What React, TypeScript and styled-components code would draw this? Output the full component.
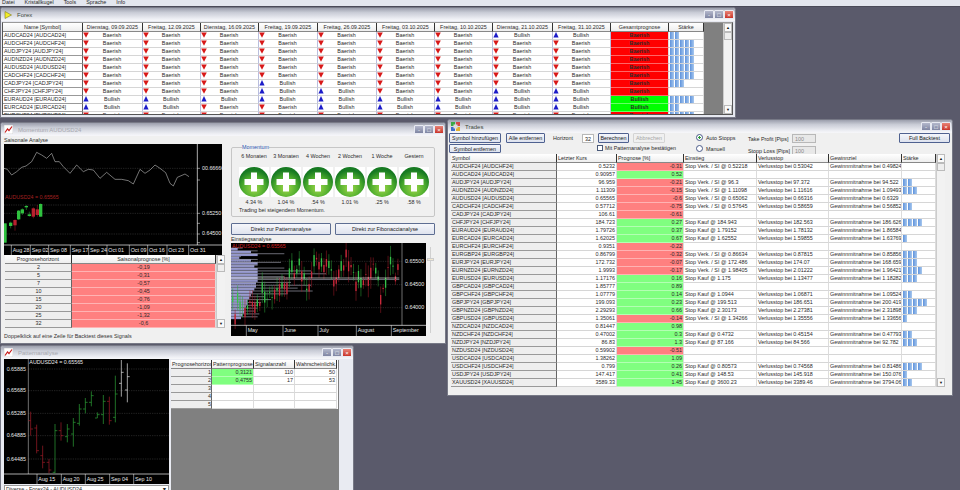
import React from "react";
import styled, { createGlobalStyle } from "styled-components";

const GlobalStyle = createGlobalStyle`
  html, body {
    margin: 0;
    padding: 0;
    background: #5a5a6b;
  }
  * {
    box-sizing: border-box;
  }
`;

const FONT = `"Liberation Sans", Arial, sans-serif`;

const Desktop = styled.div`
  position: relative;
  width: 960px;
  height: 490px;
  overflow: hidden;
  background: #5a5a6b;
  font-family: ${FONT};
  font-size: 5.4px;
  color: #2a2a2a;
`;

const MenuBar = styled.div`
  height: 7px;
  display: flex;
  gap: 10px;
  padding-left: 2px;
  background: #e3e6ee;
  border-bottom: 1px solid #4a4a58;
  line-height: 4px;
  overflow: hidden;
`;

const Win = styled.section<{ $x: number; $y: number; $w: number; $h: number }>`
  position: absolute;
  left: ${(p) => p.$x}px;
  top: ${(p) => p.$y}px;
  width: ${(p) => p.$w}px;
  height: ${(p) => p.$h}px;
  display: flex;
  flex-direction: column;
  background: #e6e8f0;
  border: 1px solid #777986;
  border-radius: 3px 3px 0 0;
  overflow: hidden;
`;

const TitleBar = styled.header<{ $dim?: boolean }>`
  flex: none;
  height: 13px;
  display: flex;
  align-items: center;
  gap: 5px;
  padding: 0 1px 0 3px;
  background: linear-gradient(#9b9eac, #c9ccd6 35%, #eff0f5 85%, #f7f7fa);
  color: ${(p) => (p.$dim ? "#a8a9b0" : "#3c4a3c")};
  font-size: 6px;
`;

const TitleText = styled.span`
  flex: 1;
`;

const CapRow = styled.div`
  display: flex;
  gap: 0;
`;

const CapBtn = styled.span<{ $close?: boolean }>`
  width: 10px;
  height: 9px;
  display: flex;
  align-items: center;
  justify-content: center;
  border: 1px solid #e8eaf2;
  border-radius: 1px;
  background: ${(p) =>
    p.$close
      ? "linear-gradient(#e88478, #c93328)"
      : "linear-gradient(#b4b8cc, #7f85a2)"};
  color: #fff;
  font-size: 6px;
  line-height: 1;
`;

const Caption = () => (
  <CapRow>
    <CapBtn>-</CapBtn>
    <CapBtn>□</CapBtn>
    <CapBtn $close>×</CapBtn>
  </CapRow>
);

const Row = styled.div<{ $cols: string }>`
  display: grid;
  grid-template-columns: ${(p) => p.$cols};
  height: 8px;
  flex: none;
`;

const HeadRow = styled(Row)`
  height: 9px;
`;

const Head = styled.div<{ $left?: boolean }>`
  padding: 0 1px;
  line-height: 8px;
  white-space: nowrap;
  overflow: hidden;
  text-align: ${(p) => (p.$left ? "left" : "center")};
  background: linear-gradient(#fff, #eeeeee);
  border-right: 1px solid #333;
  border-bottom: 1px solid #888;
`;

const NameCell = styled.div<{ $shade?: boolean }>`
  padding-left: 1px;
  line-height: 7px;
  white-space: nowrap;
  overflow: hidden;
  background: ${(p) => (p.$shade ? "#eeeeee" : "#fff")};
  border-bottom: 1px solid #999;
  border-right: 1px solid #666;
`;

const Cell = styled.div<{ $align?: string; $bg?: string; $bold?: boolean }>`
  padding: 0 1px;
  line-height: 7px;
  white-space: nowrap;
  overflow: hidden;
  text-align: ${(p) => p.$align ?? "left"};
  background: ${(p) => p.$bg ?? "#fff"};
  font-weight: ${(p) => (p.$bold ? 700 : 400)};
  border-bottom: 1px solid ${(p) => (p.$bg ? "#ffffff66" : "#d6d6d6")};
  border-right: 1px solid #dcdcdc;
`;

const SignalCell = styled(Cell)`
  display: flex;
  align-items: flex-start;
  border-right-color: #b9bedd;
  padding: 0;
`;

const SignalText = styled.span`
  flex: 1;
  text-align: center;
  padding-right: 7px;
`;

const Bars = styled.div`
  display: flex;
  gap: 0.6px;
  height: 7px;
`;

const Bar = styled.i`
  display: block;
  width: 4.4px;
  background: linear-gradient(90deg, #5f93dc, #a8c8ee);
`;

const Strength = ({ n }: { n: number }) => (
  <Bars>
    {Array.from({ length: n }, (_, i) => (
      <Bar key={i} />
    ))}
  </Bars>
);

const Scroll = styled.div`
  flex: none;
  width: 9px;
  display: flex;
  flex-direction: column;
  background: #f2f2f2;
  border-left: 1px solid #ccc;
`;

const ScrollBtn = styled.div`
  flex: none;
  height: 9px;
  display: flex;
  align-items: center;
  justify-content: center;
  background: #fafafa;
  border: 1px solid #bbb;
  font-size: 4px;
  color: #111;
`;

const ScrollThumb = styled.div`
  flex: none;
  height: 8px;
  background: #eeeeee;
  border: 1px solid #bbb;
`;

const ScrollGap = styled.div`
  flex: 1;
`;

const ScrollBar = () => (
  <Scroll>
    <ScrollBtn>▲</ScrollBtn>
    <ScrollThumb />
    <ScrollGap />
    <ScrollBtn>▼</ScrollBtn>
  </Scroll>
);

const SignalMark = ({ up }: { up: boolean }) => (
  <svg width="6" height="7" viewBox="0 0 6 7" style={{ flex: "none" }}>
    {up ? (
      <path d="M3 0 L5.6 5.5 H0.4 Z" fill="#1c1cc8" />
    ) : (
      <path d="M0.2 0.5 H5.8 L3 5.8 Z" fill="#d81818" />
    )}
  </svg>
);

/* forex window */
const FOREX_COLS = "80px 60px 58px 58px 59px 59px 58px 58px 60px 58px 58px 35px";
const DATES = [
  "Dienstag, 09.09.2025",
  "Freitag, 12.09.2025",
  "Dienstag, 16.09.2025",
  "Freitag, 19.09.2025",
  "Freitag, 26.09.2025",
  "Freitag, 03.10.2025",
  "Freitag, 10.10.2025",
  "Dienstag, 21.10.2025",
  "Freitag, 31.10.2025",
];
const FOREX: [string, string, boolean, number][] = [
  ["AUDCAD24 [AUDCAD24]", "BBBBBBBUU", false, 2],
  ["AUDCHF24 [AUDCHF24]", "BBBBBBBBB", false, 5],
  ["AUDJPY24 [AUDJPY24]", "BBBBBBBBB", false, 5],
  ["AUDNZD24 [AUDNZD24]", "BBBBBBBBB", false, 5],
  ["AUDUSD24 [AUDUSD24]", "BBBBBBBBB", false, 5],
  ["CADCHF24 [CADCHF24]", "BBBBBBBBB", false, 5],
  ["CADJPY24 [CADJPY24]", "BBBUBBBBB", false, 3],
  ["CHFJPY24 [CHFJPY24]", "BBBUUBBUU", false, 0],
  ["EURAUD24 [EURAUD24]", "UUUUUUUUU", true, 5],
  ["EURCAD24 [EURCAD24]", "UUBBUUUUU", true, 2],
  ["EURCHF24 [EURCHF24]", "BBBBBBBBB", false, 5],
];

const ForexBody = styled.div`
  flex: 1;
  min-height: 0;
  display: flex;
  margin: 1px 2px 2px 1px;
  background: #808080;
  border: 1px solid #555;
  border-top-color: #9a9a9a;
  overflow: hidden;
`;

const TableCol = styled.div`
  flex: 1;
  min-width: 0;
  display: flex;
  flex-direction: column;
  overflow: hidden;
`;

const ForexWindow = () => (
  <Win $x={0} $y={7} $w={736} $h={111}>
    <TitleBar>
      <svg width="8" height="8" viewBox="0 0 8 8">
        <path d="M1 0.5 L7.5 4 L1 7.5 Z" fill="#f2ec2a" stroke="#7d7a18" strokeWidth="0.6" />
      </svg>
      <TitleText>Forex</TitleText>
      <Caption />
    </TitleBar>
    <ForexBody>
      <TableCol>
        <HeadRow $cols={FOREX_COLS}>
          <Head>Name [Symbol]</Head>
          {DATES.map((d) => (
            <Head key={d}>{d}</Head>
          ))}
          <Head>Gesamtprognose</Head>
          <Head>Stärke</Head>
        </HeadRow>
        {FOREX.map(([name, sig, bull, n]) => (
          <Row $cols={FOREX_COLS} key={name}>
            <NameCell>{name}</NameCell>
            {sig.split("").map((s, i) => (
              <SignalCell key={i}>
                <SignalMark up={s === "U"} />
                <SignalText>{s === "U" ? "Bullish" : "Baerish"}</SignalText>
              </SignalCell>
            ))}
            <Cell $align="center" $bold $bg={bull ? "#00ff00" : "#ff0000"}>
              {bull ? "Bullish" : "Baerish"}
            </Cell>
            <Cell>
              <Strength n={n} />
            </Cell>
          </Row>
        ))}
      </TableCol>
      <ScrollBar />
    </ForexBody>
  </Win>
);

/* charts */
const noise = (i: number) => {
  const v = Math.sin(i * 12.9898) * 43758.5453;
  return v - Math.floor(v);
};

const lerpTrack = (track: number[][], x: number) => {
  for (let i = 1; i < track.length; i++) {
    if (x <= track[i][0]) {
      const [x0, y0] = track[i - 1];
      const [x1, y1] = track[i];
      return y0 + ((y1 - y0) * (x - x0)) / (x1 - x0);
    }
  }
  return track[track.length - 1][1];
};

const GREEN = "#2fa83a";
const RED = "#a81c2a";

const SEASON_LINE =
  "12,145 22,148 35,165 50,155 65,142 78,138 95,125 110,97 125,105 140,115 155,100 165,125 178,125 190,140 210,160 230,135 250,155 265,148 280,150 300,175 320,157 345,178 365,178 385,182 400,192 420,148 435,160 450,150 465,135 480,145 497,158 510,190 520,198 532,172 555,162 567,170";
const SEASON_CANDLES = [
  [15, 310, 368, 310, 368, 1],
  [32, 305, 325, 308, 318, 1],
  [45, 298, 332, 300, 316, 0],
  [56, 270, 300, 272, 298, 1],
  [67, 265, 285, 268, 280, 1],
  [79, 255, 270, 258, 262, 1],
  [88, 275, 290, 283, 288, 1],
  [100, 262, 295, 265, 290, 0],
  [112, 255, 290, 268, 285, 0],
  [122, 250, 290, 252, 290, 1],
];
const SEASON_TICKS = [
  ["Aug 28", 38],
  ["Sep 02", 95],
  ["Sep 08", 150],
  ["Sep 17", 215],
  ["Sep 24", 270],
  ["Oct 01", 325],
  ["Oct 09", 392],
  ["Oct 16", 447],
  ["Oct 23", 505],
  ["Oct 31", 570],
] as const;

const SeasonChart = () => (
  <svg width="218" height="111" viewBox="12 72 654 333" style={{ display: "block" }}>
    <rect x="12" y="72" width="654" height="333" fill="#000" />
    {[145, 255, 280, 342].map((y) => (
      <line key={y} x1="12" x2="590" y1={y} y2={y} stroke="#555" strokeWidth="1.2" strokeDasharray="4 3" />
    ))}
    <polyline points={SEASON_LINE} fill="none" stroke="#d8d8d8" strokeWidth="1.6" />
    <line x1="592" x2="592" y1="72" y2="375" stroke="#fff" strokeWidth="2" />
    <line x1="12" x2="666" y1="375" y2="375" stroke="#fff" strokeWidth="2" />
    {SEASON_CANDLES.map(([x, lo, hi, a, b, g]) => (
      <g key={x}>
        <line x1={x} x2={x} y1={lo} y2={hi} stroke={g ? GREEN : RED} strokeWidth="1.6" />
        <rect x={x - 5} y={a} width="10" height={b - a} fill={g ? "#2fc23f" : "#b8202e"} />
      </g>
    ))}
    <text x="15" y="238" fill="#a52020" fontSize="16">AUDUSD24 = 0.65565</text>
    <g fill="#e8e8e8" fontSize="16">
      <text x="606" y="149">00.66666</text>
      <text x="606" y="285">0.65250</text>
      <text x="606" y="346">0.64500</text>
    </g>
    {[145, 180, 280, 310, 342, 368].map((y) => (
      <line key={y} x1="592" x2="600" y1={y} y2={y} stroke="#fff" strokeWidth="1.5" />
    ))}
    {SEASON_TICKS.map(([t, x]) => (
      <g key={t}>
        <line x1={x - 4} x2={x - 4} y1="375" y2="405" stroke="#fff" strokeWidth="1.5" />
        <text x={x} y="396" fill="#e8e8e8" fontSize="16">{t}</text>
      </g>
    ))}
  </svg>
);

const ENTRY_TRACK = [
  [20, 570], [60, 570], [100, 540], [140, 520], [190, 480], [220, 460], [245, 500], [270, 430],
  [300, 420], [330, 480], [350, 440], [360, 400], [380, 470], [395, 510], [420, 470], [440, 440],
  [460, 510], [465, 550], [490, 450], [510, 470], [520, 430],
];
const ENTRY_HIST = [35, 80, 160, 30, 80, 150, 80, 160, 240, 285, 160, 505, 180, 240, 200, 245, 170, 100, 120, 90, 80, 80, 70, 85, 80];
const ENTRY_FILL = [20, 60, 80, 25, 60, 80, 70, 80, 80, 80, 80, 80, 75, 75, 70, 65, 60, 55, 50, 50, 45, 40, 40, 35, 30];
const ENTRY_CANDLES = Array.from({ length: 68 }, (_, i) => {
  const x = 20 + i * 7.4;
  const c = lerpTrack(ENTRY_TRACK, x);
  const a = c + (noise(i) - 0.5) * 40;
  const b = a + (noise(i + 100) - 0.5) * 70;
  const wick = 10 + noise(i + 200) * 25;
  return { x, top: Math.min(a, b), bot: Math.max(a, b), wick, up: b < a };
});

const EntryChart = () => (
  <svg width="195" height="93" viewBox="15 373 585 279" style={{ display: "block" }}>
    <rect x="15" y="373" width="585" height="279" fill="#000" />
    {ENTRY_HIST.map((w, i) => (
      <g key={i}>
        <rect x="15" y={388 + i * 8.6} width={ENTRY_FILL[i]} height="7" fill="#8f92c8" />
        <line x1="15" x2={15 + w} y1={388 + i * 8.6} y2={388 + i * 8.6} stroke="#d4d4e8" strokeWidth="1.5" />
      </g>
    ))}
    {[428, 498, 567].map((y) => (
      <line key={y} x1="15" x2="528" y1={y} y2={y} stroke="#555" strokeWidth="1.2" strokeDasharray="4 3" />
    ))}
    {ENTRY_CANDLES.map((k) => (
      <g key={k.x}>
        <line x1={k.x} x2={k.x} y1={k.top - k.wick} y2={k.bot + k.wick} stroke={k.up ? GREEN : RED} strokeWidth="1.5" />
        <rect x={k.x - 2} y={k.top} width="4" height={Math.max(k.bot - k.top, 2)} fill={k.up ? "#36c24a" : "#c8283a"} />
      </g>
    ))}
    <line x1="15" x2="520" y1="478" y2="478" stroke="#e8e8e8" strokeWidth="2" />
    <line x1="528" x2="528" y1="373" y2="620" stroke="#ddd" strokeWidth="1.5" />
    <line x1="15" x2="600" y1="620" y2="620" stroke="#fff" strokeWidth="2" />
    <text x="18" y="389" fill="#d02020" fontSize="16">AUDUSD24 = 0.65565</text>
    <g fill="#e8e8e8" fontSize="16">
      <text x="537" y="433">0.65500</text>
      <text x="537" y="503">0.64500</text>
      <text x="537" y="572">0.64000</text>
    </g>
    {[
      ["May", 65],
      ["June", 175],
      ["July", 280],
      ["August", 395],
      ["September", 500],
    ].map(([t, x]) => (
      <g key={t as string}>
        <line x1={(x as number) - 4} x2={(x as number) - 4} y1="620" y2="652" stroke="#fff" strokeWidth="1.5" />
        <text x={x} y="639" fill="#e8e8e8" fontSize="16">{t}</text>
      </g>
    ))}
  </svg>
);

const PATTERN_BARS = [
  [92, 213, 285, 240, 265, RED],
  [110, 252, 338, 262, 330, RED],
  [128, 315, 383, 345, 365, RED],
  [147, 355, 398, 365, 388, RED],
  [165, 250, 398, 395, 270, GREEN],
  [183, 245, 300, 270, 285, RED],
  [202, 250, 305, 288, 265, GREEN],
  [220, 232, 318, 280, 245, GREEN],
  [238, 190, 255, 248, 205, GREEN],
  [256, 172, 218, 205, 185, GREEN],
  [274, 152, 197, 185, 165, GREEN],
  [292, 215, 232, 232, 222, GREEN],
  [310, 163, 250, 222, 182, GREEN],
  [328, 168, 252, 182, 240, RED],
  [346, 105, 245, 230, 160, GREEN],
  [364, 58, 168, 128, 95, "#f0f0f0"],
  [382, 68, 185, 148, 108, "#f0f0f0"],
] as const;

const PatternChart = () => (
  <svg width="165" height="125" viewBox="12 55 495 375" style={{ display: "block" }}>
    <rect x="12" y="55" width="495" height="375" fill="#000" />
    {[85, 150, 218, 285, 355].map((y) => (
      <line key={y} x1="85" x2="507" y1={y} y2={y} stroke="#555" strokeWidth="1.2" strokeDasharray="4 3" />
    ))}
    <line x1="85" x2="85" y1="55" y2="400" stroke="#ddd" strokeWidth="1.5" />
    <line x1="12" x2="507" y1="400" y2="400" stroke="#fff" strokeWidth="2" />
    {PATTERN_BARS.map(([x, hi, lo, o, c, col]) => (
      <g key={x} stroke={col} strokeWidth="2">
        <line x1={x} x2={x} y1={hi} y2={lo} />
        <line x1={x - 7} x2={x} y1={o} y2={o} />
        <line x1={x} x2={x + 7} y1={c} y2={c} />
      </g>
    ))}
    <text x="88" y="69" fill="#e8e8e8" fontSize="16">AUDUSD24 = 0.65565</text>
    {[
      ["0.65885", 85],
      ["0.65685", 150],
      ["0.65285", 218],
      ["0.64885", 285],
      ["0.64485", 355],
    ].map(([t, y]) => (
      <text key={t as string} x="20" y={(y as number) + 5} fill="#e8e8e8" fontSize="16">{t}</text>
    ))}
    {[
      ["Aug 15", 115],
      ["Aug 20", 188],
      ["Aug 25", 260],
      ["Sep 04", 333],
      ["Sep 10", 405],
    ].map(([t, x]) => (
      <g key={t as string}>
        <line x1={(x as number) - 4} x2={(x as number) - 4} y1="400" y2="430" stroke="#fff" strokeWidth="1.5" />
        <text x={x} y="420" fill="#e8e8e8" fontSize="16">{t}</text>
      </g>
    ))}
  </svg>
);

/* momentum window */
const MomentumIcon = () => (
  <svg width="9" height="9" viewBox="0 0 9 9">
    <rect width="9" height="9" fill="#fff" stroke="#bbb" strokeWidth="0.5" />
    <path d="M1 7.5 L3.5 4 L5 5.5 L8 1.5" fill="none" stroke="#c81e1e" strokeWidth="1.2" />
  </svg>
);

const MomentumBody = styled.div`
  flex: 1;
  min-height: 0;
  display: flex;
  gap: 6px;
  padding: 0 3px;
  background: #f0f0f0;
`;

const LeftCol = styled.div`
  width: 221px;
  flex: none;
  display: flex;
  flex-direction: column;
`;

const RightCol = styled.div`
  flex: 1;
  display: flex;
  flex-direction: column;
  padding-top: 9px;
`;

const Caption6 = styled.div`
  height: 8px;
  flex: none;
  line-height: 8px;
  white-space: nowrap;
`;

const SeasonTable = styled.div`
  height: 73px;
  flex: none;
  display: flex;
  background: #fff;
  overflow: hidden;
  margin-left: 1px;
`;

const StatusLine = styled.div`
  margin-top: 3px;
  height: 10px;
  line-height: 10px;
  white-space: nowrap;
  color: #333;
`;

const MomGroup = styled.fieldset`
  margin: 0;
  padding: 0 0 0 6px;
  width: 204px;
  height: 72px;
  flex: none;
  border: 1px solid #c6c6c6;
  border-radius: 2px;
`;

const MomLegend = styled.legend`
  margin-left: 4px;
  padding: 0;
  color: #2a55b0;
  line-height: 5px;
`;

const MomGrid = styled.div`
  display: grid;
  grid-template-columns: repeat(6, 32px);
  grid-template-rows: 17px 30px 10px;
  justify-items: center;
  align-items: center;
`;

const MomLabel = styled.span`
  align-self: start;
  line-height: 12px;
`;

const MomNote = styled.div`
  line-height: 7px;
  margin-left: 1px;
`;

const OrbBox = styled.div`
  width: 30px;
  height: 30px;
  background: #fff;
`;

const Orb = () => (
  <OrbBox>
    <svg width="30" height="30" viewBox="0 0 30 30">
      <defs>
        <radialGradient id="orb" cx="50%" cy="70%" r="60%">
          <stop offset="0%" stopColor="#9fd84a" />
          <stop offset="60%" stopColor="#4fae2e" />
          <stop offset="100%" stopColor="#177a22" />
        </radialGradient>
      </defs>
      <circle cx="15" cy="15" r="15" fill="url(#orb)" />
      <path d="M12 5.5 H18 V12 H24.5 V18 H18 V24.5 H12 V18 H5.5 V12 H12 Z" fill="#fff" />
    </svg>
  </OrbBox>
);

const ActionRow = styled.div`
  display: flex;
  gap: 4px;
  margin-top: 6px;
`;

const ActionBtn = styled.button`
  width: 100px;
  height: 12px;
  padding: 0;
  font: inherit;
  color: #222;
  background: linear-gradient(#f6f7fb, #dfe3ee);
  border: 1px solid #5e6e92;
  border-radius: 1px;
`;

const EntryWrap = styled.div`
  display: flex;
  gap: 0;
`;

const Slider = styled.div`
  position: relative;
  width: 9px;
  height: 86px;
  margin-top: 4px;
  flex: none;
  display: flex;
  justify-content: center;
`;

const SliderTrack = styled.div`
  width: 1px;
  background: #d0d0d0;
`;

const SliderThumb = styled.div`
  position: absolute;
  top: 11px;
  left: 1px;
  width: 7px;
  height: 3px;
  background: #f2e8d0;
  border: 1px solid #ccc;
`;

const Centered = styled.span`
  display: block;
  text-align: center;
`;

const MOM_LABELS = ["6 Monaten", "3 Monaten", "4 Wochen", "2 Wochen", "1 Woche", "Gestern"];
const MOM_VALUES = ["4.34 %", "1.04 %", ".54 %", "1.01 %", ".25 %", ".58 %"];
const SEASON_COLS = "67px 1fr";
const SEASON_ROWS = [
  ["2", "-0,19"],
  ["5", "-0,31"],
  ["7", "-0,57"],
  ["10", "-0,45"],
  ["15", "-0,76"],
  ["20", "-1,09"],
  ["25", "-1,32"],
  ["32", "-0,6"],
  ["40", "-1,03"],
];

const MomentumWindow = () => (
  <Win $x={0} $y={122} $w={446} $h={222}>
    <TitleBar $dim>
      <MomentumIcon />
      <TitleText>Momentum AUDUSD24</TitleText>
      <Caption />
    </TitleBar>
    <MomentumBody>
      <LeftCol>
        <Caption6>Saisonale Analyse</Caption6>
        <SeasonChart />
        <SeasonTable>
          <TableCol>
            <HeadRow $cols={SEASON_COLS}>
              <Head>Prognosehorizont</Head>
              <Head>Saisonalprognose [%]</Head>
            </HeadRow>
            {SEASON_ROWS.map(([h, v]) => (
              <Row $cols={SEASON_COLS} key={h}>
                <NameCell $shade>
                  <Centered>{h}</Centered>
                </NameCell>
                <Cell $align="center" $bg="#ff8080">{v}</Cell>
              </Row>
            ))}
          </TableCol>
          <ScrollBar />
        </SeasonTable>
        <StatusLine>Doppelklick auf eine Zeile für Backtest dieses Signals</StatusLine>
      </LeftCol>
      <RightCol>
        <MomGroup>
          <MomLegend>Momentum</MomLegend>
          <MomGrid>
            {MOM_LABELS.map((l) => (
              <MomLabel key={l}>{l}</MomLabel>
            ))}
            {MOM_LABELS.map((l) => (
              <Orb key={l} />
            ))}
            {MOM_VALUES.map((v, i) => (
              <span key={i}>{v}</span>
            ))}
          </MomGrid>
          <MomNote>Trading bei steigendem Momentum.</MomNote>
        </MomGroup>
        <ActionRow>
          <ActionBtn>Direkt zur Patternanalyse</ActionBtn>
          <ActionBtn>Direkt zur Fibonaccianalyse</ActionBtn>
        </ActionRow>
        <Caption6>Einstiegsanalyse</Caption6>
        <EntryWrap>
          <EntryChart />
          <Slider>
            <SliderTrack />
            <SliderThumb />
          </Slider>
        </EntryWrap>
      </RightCol>
    </MomentumBody>
  </Win>
);

/* trades window */
const TradesIcon = () => (
  <svg width="9" height="9" viewBox="0 0 9 9">
    <rect x="0" y="0" width="4" height="4" fill="#3aa845" />
    <rect x="5" y="0" width="4" height="4" fill="#d24848" />
    <rect x="0" y="5" width="4" height="4" fill="#3f6fc8" />
    <rect x="5" y="5" width="4" height="4" fill="#e0b030" />
    <rect x="2.5" y="2.5" width="4" height="4" fill="#ddd" />
  </svg>
);

const TradesBody = styled.div`
  flex: 1;
  min-height: 0;
  display: flex;
  flex-direction: column;
  padding: 0 2px 0 1px;
  background: #f0f0f0;
`;

const Toolbar = styled.div`
  flex: none;
  height: 21px;
  display: flex;
`;

const ToolStack = styled.div`
  flex: none;
  display: flex;
  flex-direction: column;
  gap: 1px;
`;

const ToolBtn = styled.button<{ $w: number; $h?: number; $off?: boolean }>`
  flex: none;
  width: ${(p) => p.$w}px;
  height: ${(p) => p.$h ?? 10}px;
  padding: 0;
  font: inherit;
  color: ${(p) => (p.$off ? "#a6a6a6" : "#222")};
  background: ${(p) => (p.$off ? "#f0f0f0" : "linear-gradient(#f4f6fb, #dde2ee)")};
  border: 1px solid ${(p) => (p.$off ? "#d4d4d4" : "#4f6190")};
  border-radius: 1px;
`;

const MidStack = styled(ToolStack)`
  width: 159px;
  margin-left: 5px;
  gap: 2px;
`;

const ToolLine = styled.div`
  display: flex;
  align-items: center;
  white-space: nowrap;
`;

const HorizonLabel = styled.span`
  margin: 0 auto 0 8px;
`;

const Field = styled.span<{ $w: number; $off?: boolean }>`
  flex: none;
  width: ${(p) => p.$w}px;
  height: 9px;
  line-height: 8px;
  padding-left: 2px;
  background: ${(p) => (p.$off ? "#e8e8e8" : "#fff")};
  border: 1px solid #b8b8b8;
  color: ${(p) => (p.$off ? "#888" : "#222")};
`;

const GapBtn = styled(ToolBtn)`
  margin-left: 4px;
`;

const CheckLine = styled(ToolLine)`
  padding-left: 91px;
  gap: 2px;
`;

const CheckBox = styled.span`
  flex: none;
  width: 6px;
  height: 6px;
  background: #fff;
  border: 1px solid #4a5a7a;
`;

const RadioStack = styled.div`
  flex: none;
  width: 36px;
  margin-left: 31px;
  display: flex;
  flex-direction: column;
  gap: 4px;
  padding-top: 1px;
`;

const RadioLine = styled(ToolLine)`
  gap: 3px;
`;

const Radio = styled.span<{ $on?: boolean }>`
  flex: none;
  width: 7px;
  height: 7px;
  border-radius: 50%;
  background: ${(p) => (p.$on ? "radial-gradient(#2a9a3a 35%, #fff 40%)" : "#fff")};
  border: 1px solid #4a5a8a;
`;

const StopStack = styled.div`
  flex: none;
  margin-left: 16px;
  display: flex;
  flex-direction: column;
  gap: 3px;
  padding-top: 1px;
`;

const StopLine = styled(ToolLine)`
  width: 68px;
  justify-content: space-between;
`;

const FullBtn = styled(ToolBtn)`
  margin-left: 83px;
`;

const TradesTable = styled.div`
  flex: none;
  height: 233px;
  display: flex;
  margin: 0 5px 0 2px;
  background: #fff;
`;

const TRADE_COLS = "106px 60px 67px 73px 72px 73px 1fr";
type Trade = [string, string, string, string?, string?, string?, number?];
const TRADES: Trade[] = [
  ["AUDCHF24 [AUDCHF24]", "0.5232", "-0.31", "Stop Verk. / SI @ 0.52218", "Verlusstop bei 0.53042", "Gewinnmitnahme bei 0.49824", 0],
  ["AUDCAD24 [AUDCAD24]", "0.90957", "0.52"],
  ["AUDJPY24 [AUDJPY24]", "96.959", "-0.21", "Stop Verk. / SI @ 96.3", "Verlusstop bei 97.372", "Gewinnmitnahme bei 94.522", 2],
  ["AUDNZD24 [AUDNZD24]", "1.11309", "-0.15", "Stop Verk. / SI @ 1.11098", "Verlusstop bei 1.11616", "Gewinnmitnahme bei 1.09493", 3],
  ["AUDUSD24 [AUDUSD24]", "0.65565", "-0.6", "Stop Verk. / SI @ 0.65062", "Verlusstop bei 0.66316", "Gewinnmitnahme bei 0.6329", 0],
  ["CADCHF24 [CADCHF24]", "0.57712", "-0.75", "Stop Verk. / SI @ 0.57645", "Verlusstop bei 0.58659", "Gewinnmitnahme bei 0.56852", 2],
  ["CADJPY24 [CADJPY24]", "106.61", "-0.61"],
  ["CHFJPY24 [CHFJPY24]", "184.723", "0.27", "Stop Kauf @ 184.943", "Verlusstop bei 182.563", "Gewinnmitnahme bei 186.626", 4],
  ["EURAUD24 [EURAUD24]", "1.79726", "0.37", "Stop Kauf @ 1.79152", "Verlusstop bei 1.78132", "Gewinnmitnahme bei 1.86584", 0],
  ["EURCAD24 [EURCAD24]", "1.62025", "0.67", "Stop Kauf @ 1.62552", "Verlusstop bei 1.59855", "Gewinnmitnahme bei 1.63769", 1],
  ["EURCHF24 [EURCHF24]", "0.9351", "-0.22"],
  ["EURGBP24 [EURGBP24]", "0.86799", "-0.32", "Stop Verk. / SI @ 0.86634", "Verlusstop bei 0.87815", "Gewinnmitnahme bei 0.85856", 3],
  ["EURJPY24 [EURJPY24]", "172.732", "-0.07", "Stop Verk. / SI @ 172.486", "Verlusstop bei 174.07", "Gewinnmitnahme bei 168.659", 3],
  ["EURNZD24 [EURNZD24]", "1.9993", "-0.17", "Stop Verk. / SI @ 1.98405", "Verlusstop bei 2.01222", "Gewinnmitnahme bei 1.96421", 4],
  ["EURUSD24 [EURUSD24]", "1.17176", "0.16", "Stop Kauf @ 1.175", "Verlusstop bei 1.13477", "Gewinnmitnahme bei 1.18282", 3],
  ["GBPCAD24 [GBPCAD24]", "1.85777", "0.89"],
  ["GBPCHF24 [GBPCHF24]", "1.07779", "0.14", "Stop Kauf @ 1.0944", "Verlusstop bei 1.06871", "Gewinnmitnahme bei 1.09524", 2],
  ["GBPJPY24 [GBPJPY24]", "199.093", "0.23", "Stop Kauf @ 199.513", "Verlusstop bei 186.651", "Gewinnmitnahme bei 200.419", 5],
  ["GBPNZD24 [GBPNZD24]", "2.29293", "0.66", "Stop Kauf @ 2.30173", "Verlusstop bei 2.27381", "Gewinnmitnahme bei 2.31898", 3],
  ["GBPUSD24 [GBPUSD24]", "1.35061", "-0.14", "Stop Verk. / SI @ 1.34266", "Verlusstop bei 1.35556", "Gewinnmitnahme bei 1.33656", 1],
  ["NZDCAD24 [NZDCAD24]", "0.81447", "0.98"],
  ["NZDCHF24 [NZDCHF24]", "0.47002", "0.3", "Stop Kauf @ 0.4732", "Verlusstop bei 0.45154", "Gewinnmitnahme bei 0.47793", 2],
  ["NZDJPY24 [NZDJPY24]", "86.83", "1.3", "Stop Kauf @ 87.166", "Verlusstop bei 84.566", "Gewinnmitnahme bei 92.782", 3],
  ["NZDUSD24 [NZDUSD24]", "0.59902", "-0.51"],
  ["USDCAD24 [USDCAD24]", "1.38262", "1.09"],
  ["USDCHF24 [USDCHF24]", "0.799", "0.26", "Stop Kauf @ 0.80573", "Verlusstop bei 0.74568", "Gewinnmitnahme bei 0.81486", 4],
  ["USDJPY24 [USDJPY24]", "147.417", "0.41", "Stop Kauf @ 148.53", "Verlusstop bei 145.918", "Gewinnmitnahme bei 150.076", 1],
  ["XAUUSD24 [XAUUSD24]", "3589.33", "1.45", "Stop Kauf @ 3600.23", "Verlusstop bei 3389.46", "Gewinnmitnahme bei 3794.06", 2],
];

const TradesWindow = () => (
  <Win $x={447} $y={119} $w={506} $h={277}>
    <TitleBar>
      <TradesIcon />
      <TitleText>Trades</TitleText>
      <Caption />
    </TitleBar>
    <TradesBody>
      <Toolbar>
        <ToolStack>
          <ToolBtn $w={52}>Symbol hinzufügen</ToolBtn>
          <ToolBtn $w={52} $h={9}>Symbol entfernen</ToolBtn>
        </ToolStack>
        <MidStack>
          <ToolLine>
            <ToolBtn $w={39}>Alle entfernen</ToolBtn>
            <HorizonLabel>Horizont</HorizonLabel>
            <Field $w={12}>32</Field>
            <GapBtn $w={31}>Berechnen</GapBtn>
            <GapBtn $w={32} $off>Abbrechen</GapBtn>
          </ToolLine>
          <CheckLine>
            <CheckBox />
            <span>Mit Patternanalyse bestätigen</span>
          </CheckLine>
        </MidStack>
        <RadioStack>
          <RadioLine>
            <Radio $on />
            <span>Auto Stopps</span>
          </RadioLine>
          <RadioLine>
            <Radio />
            <span>Manuell</span>
          </RadioLine>
        </RadioStack>
        <StopStack>
          <StopLine>
            <span>Take Profit [Pips]</span>
            <Field $w={24} $off>100</Field>
          </StopLine>
          <StopLine>
            <span>Stopp Loss [Pips]</span>
            <Field $w={24} $off>100</Field>
          </StopLine>
        </StopStack>
        <FullBtn $w={51}>Full Backtest</FullBtn>
      </Toolbar>
      <TradesTable>
        <TableCol>
          <HeadRow $cols={TRADE_COLS}>
            <Head $left>Symbol</Head>
            <Head $left>Letzter Kurs</Head>
            <Head $left>Prognose [%]</Head>
            <Head $left>Einstieg</Head>
            <Head $left>Verlusstop</Head>
            <Head $left>Gewinnziel</Head>
            <Head $left>Stärke</Head>
          </HeadRow>
          {TRADES.map(([name, last, prog, entry, stop, target, n]) => (
            <Row $cols={TRADE_COLS} key={name}>
              <NameCell $shade>{name}</NameCell>
              <Cell $align="right">{last}</Cell>
              <Cell $align="right" $bg={prog.startsWith("-") ? "#ff8080" : "#80ff80"}>{prog}</Cell>
              <Cell>{entry}</Cell>
              <Cell>{stop}</Cell>
              <Cell>{target}</Cell>
              <Cell>
                <Strength n={n ?? 0} />
              </Cell>
            </Row>
          ))}
        </TableCol>
        <ScrollBar />
      </TradesTable>
    </TradesBody>
  </Win>
);

/* pattern window */
const PatternBody = styled.div`
  flex: 1;
  min-height: 0;
  display: flex;
  gap: 2px;
  padding: 0 2px 0 3px;
  background: #e9ebf2;
`;

const PatternLeft = styled.div`
  flex: none;
  width: 165px;
  display: flex;
  flex-direction: column;
`;

const PickBox = styled.div`
  flex: none;
  margin-top: 1px;
  height: 9px;
  display: flex;
  justify-content: space-between;
  padding: 0 1px;
  background: #fff;
  border: 1px solid #999;
  line-height: 6px;
`;

const PatternGrid = styled.div`
  flex: none;
  width: 168px;
  margin-top: 1px;
  background: #808080;
`;

const PATTERN_COLS = "41px 42px 41px 42px";
const PATTERN_ROWS: [string, string, string, string, boolean][] = [
  ["1", "0,3121", "110", "50", true],
  ["2", "0,4755", "17", "53", true],
  ["3", "", "", "", false],
  ["4", "", "", "", false],
  ["5", "", "", "", false],
];

const PatternTable = styled.div`
  width: 167px;
  display: flex;
  flex-direction: column;
  background: #fff;
`;

const RightText = styled.span`
  display: block;
  text-align: right;
`;

const PatternWindow = () => (
  <Win $x={0} $y={345} $w={354} $h={150}>
    <TitleBar $dim>
      <MomentumIcon />
      <TitleText>Patternanalyse</TitleText>
      <Caption />
    </TitleBar>
    <PatternBody>
      <PatternLeft>
        <PatternChart />
        <PickBox>
          <span>Diverse - Forex24 - AUDUSD24</span>
          <span>▼</span>
        </PickBox>
      </PatternLeft>
      <PatternGrid>
        <PatternTable>
          <HeadRow $cols={PATTERN_COLS}>
            <Head $left>Prognosehorizont</Head>
            <Head $left>Patternprognose</Head>
            <Head $left>Signalanzahl</Head>
            <Head $left>Wahrscheinlichk.</Head>
          </HeadRow>
          {PATTERN_ROWS.map(([h, prog, n, w, hit]) => (
            <Row $cols={PATTERN_COLS} key={h}>
              <NameCell $shade>
                <RightText>{h}</RightText>
              </NameCell>
              <Cell $align="right" $bg={hit ? "#80ff80" : undefined}>{prog}</Cell>
              <Cell $align="right">{n}</Cell>
              <Cell $align="right">{w}</Cell>
            </Row>
          ))}
        </PatternTable>
      </PatternGrid>
    </PatternBody>
  </Win>
);

export default function App() {
  return (
    <>
      <GlobalStyle />
      <Desktop>
        <MenuBar>
          <span>Datei</span>
          <span>Kristallkugel</span>
          <span>Tools</span>
          <span>Sprache</span>
          <span>Info</span>
        </MenuBar>
        <ForexWindow />
        <MomentumWindow />
        <PatternWindow />
        <TradesWindow />
      </Desktop>
    </>
  );
}
